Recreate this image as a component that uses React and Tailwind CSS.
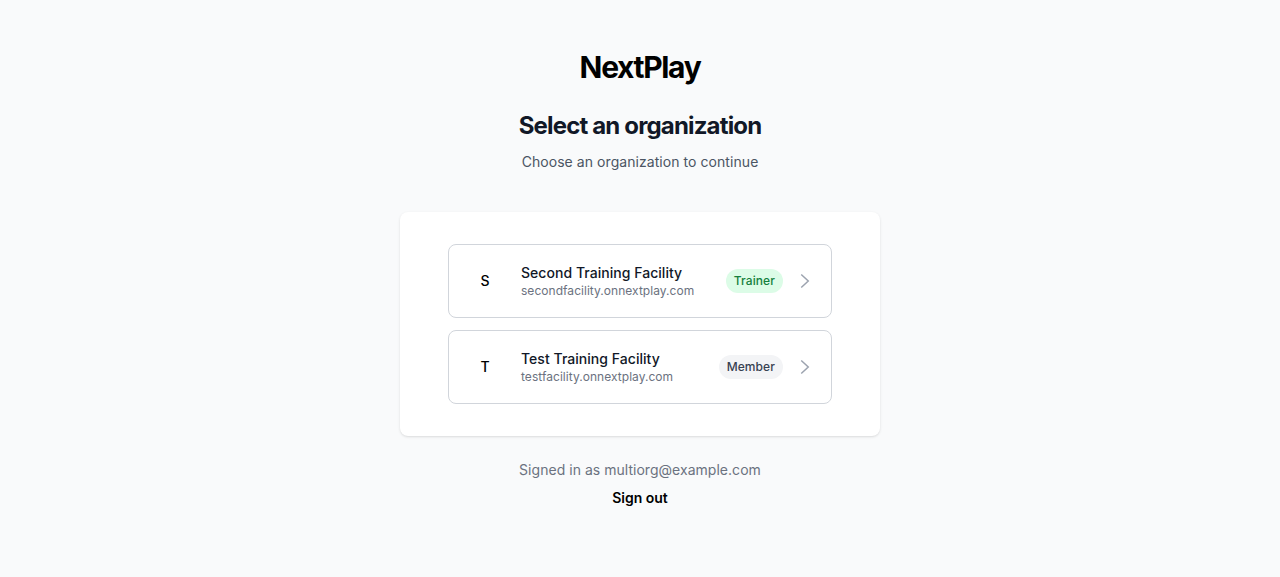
const orgs = [
  { i: "S", name: "Second Training Facility", domain: "secondfacility.onnextplay.com", role: "Trainer", badge: "bg-[#dcfce7] text-[#15803d]" },
  { i: "T", name: "Test Training Facility", domain: "testfacility.onnextplay.com", role: "Member", badge: "bg-[#f3f4f6] text-[#374151]" },
];

export default function App() {
  return (
    <div className="min-h-[577px] bg-[#f9fafb] flex flex-col items-center pt-12 font-['Inter',sans-serif]">
      <div className="text-[30px] leading-9 font-bold tracking-[-0.045em] text-black mt-[1px]">NextPlay</div>
      <h1 className="mt-[25px] text-2xl leading-8 font-bold tracking-[-0.035em] text-[#111827]">Select an organization</h1>
      <p className="mt-[10px] text-sm leading-5 tracking-[0.06px] text-[#4b5563]">Choose an organization to continue</p>
      <div className="mt-10 w-[480px] bg-white rounded-lg shadow-sm py-8 px-12 flex flex-col gap-3">
        {orgs.map((o) => (
          <div key={o.i} className="h-[74px] border border-[#d1d5db] rounded-lg flex items-center pl-6 pr-4">
            <span className="w-6 text-center text-sm font-medium text-black">{o.i}</span>
            <div className="ml-6 flex-1 flex flex-col">
              <span className="text-sm leading-5 tracking-[0.04px] font-medium text-[#111827]">{o.name}</span>
              <span className="text-xs leading-4 tracking-[0.04px] text-[#6b7280]">{o.domain}</span>
            </div>
            <span className={"px-2 h-6 rounded-full flex items-center text-xs tracking-[0.1px] font-medium " + o.badge}>{o.role}</span>
            <svg className="ml-3 w-5 h-5 text-[#9ca3af]" viewBox="0 0 20 20" fill="none" stroke="currentColor" strokeWidth="1.5">
              <path d="M6.25 3.5 13.25 10l-7 6.5" />
            </svg>
          </div>
        ))}
      </div>
      <p className="mt-6 text-sm leading-5 tracking-[0.03px] text-[#6b7280]">Signed in as multiorg@example.com</p>
      <button className="mt-2 text-sm leading-5 font-semibold text-black">Sign out</button>
    </div>
  );
}
